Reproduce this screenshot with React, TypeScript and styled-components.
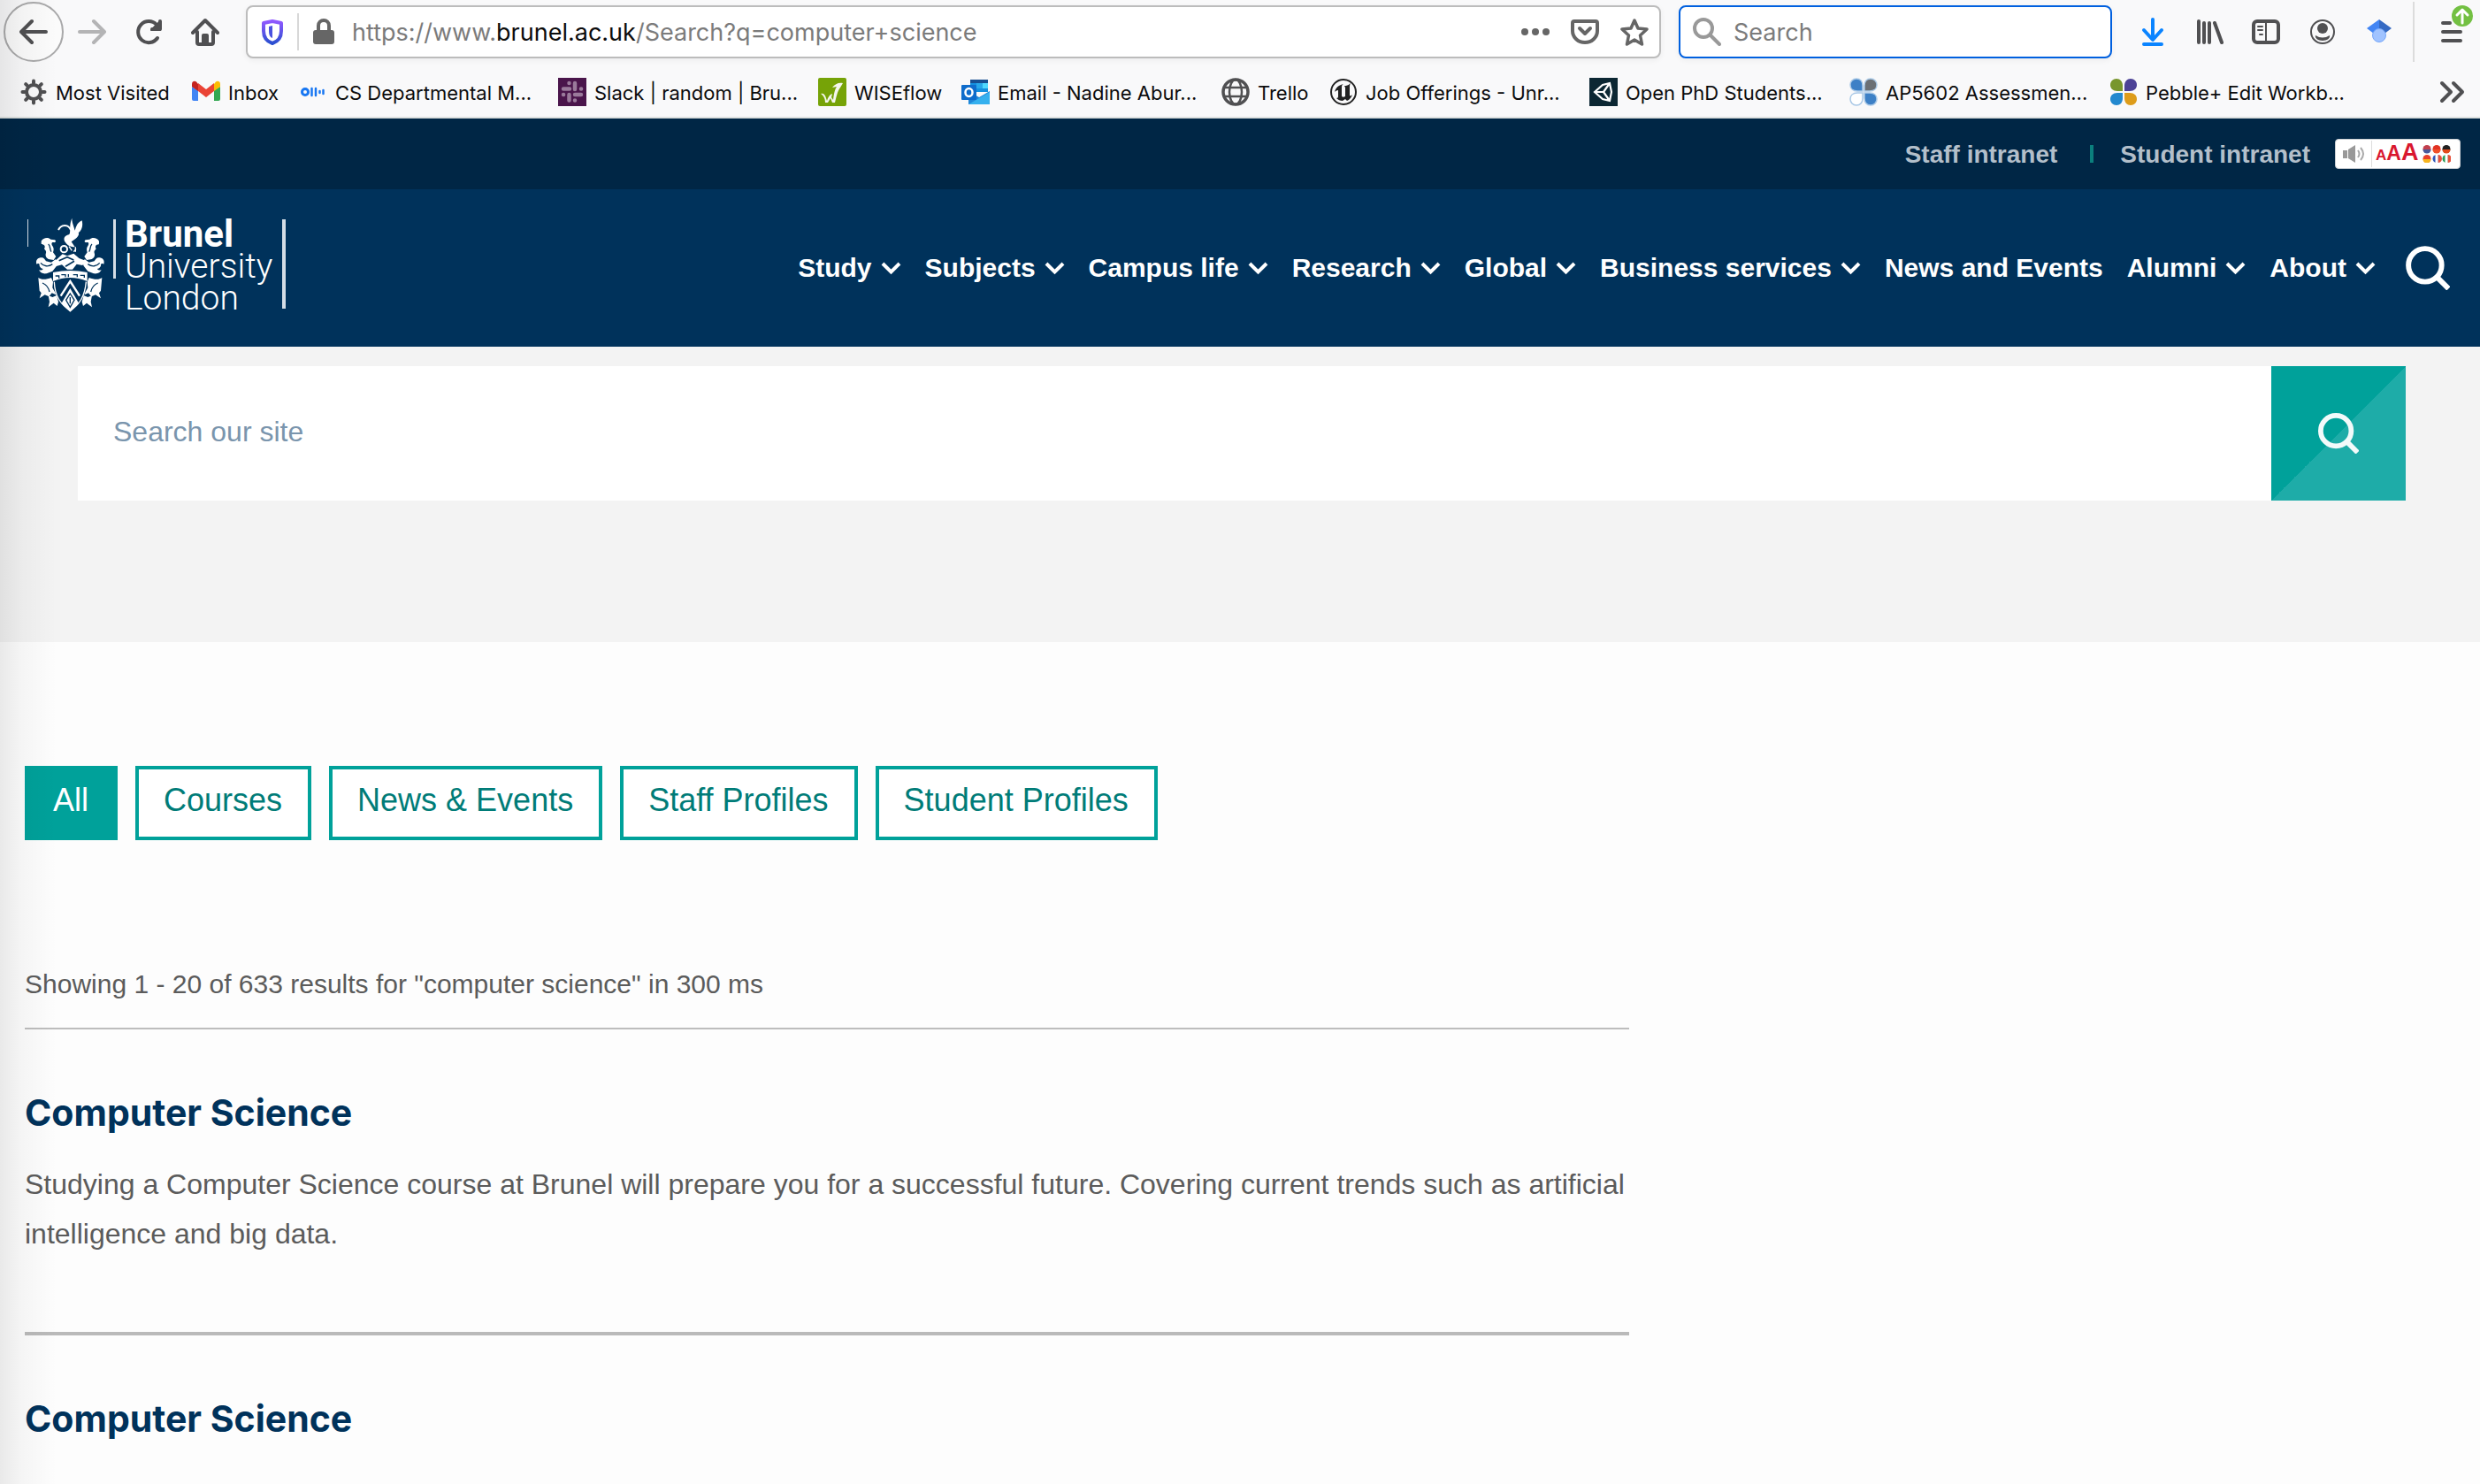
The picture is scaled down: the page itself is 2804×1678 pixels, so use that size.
import React from "react";
import styled, { createGlobalStyle } from "styled-components";

const GlobalStyle = createGlobalStyle`
  *, *::before, *::after { box-sizing: border-box; }
  body { margin: 0; background: #fdfdfd; color: #5b5b5b; font-family: "Liberation Sans", Arial, sans-serif; }
  button, input { font: inherit; }
  button { border: 0; padding: 0; background: none; cursor: pointer; }
  a { color: inherit; text-decoration: none; }
  svg { display: block; flex: none; }
  h2, p { margin: 0; }
`;

const Page = styled.div`
  position: relative;
  min-height: 100vh;
`;

const EdgeShade = styled.div`
  position: absolute;
  inset: 0 auto 0 0;
  width: 64px;
  background: linear-gradient(to right, rgba(0, 0, 0, 0.08), rgba(0, 0, 0, 0.03) 40%, rgba(0, 0, 0, 0));
  pointer-events: none;
`;

/* ---------- browser chrome ---------- */

const Chrome = styled.div`
  background: #f9f9fa;
  border-bottom: 2px solid #dde1e0;
  font-family: Inter, Roboto, sans-serif;
  color: #0c0c0d;
`;

const Toolbar = styled.div`
  display: flex;
  align-items: center;
  height: 72px;
  padding-left: 4px;
`;

const ToolButton = styled.button<{ $tone?: string }>`
  display: flex;
  align-items: center;
  justify-content: center;
  position: relative;
  width: 64px;
  height: 64px;
  flex: none;
  color: ${(p) => p.$tone ?? "#505052"};
`;

const BackButton = styled(ToolButton)`
  width: 68px;
  height: 68px;
  border: 2px solid #a9a9aa;
  border-radius: 50%;
  background: #fbfbfb;
`;

const UpdateBadge = styled.span`
  position: absolute;
  right: 8px;
  top: 2px;
`;

const Field = styled.div<{ $focused?: boolean }>`
  display: flex;
  align-items: center;
  height: 60px;
  padding: 0 12px;
  border: 2px solid ${(p) => (p.$focused ? "#0060df" : "#bcbcbc")};
  border-radius: 8px;
  background: #fff;
  box-shadow: 0 2px 6px rgba(0, 0, 0, 0.06);
  color: #666;
`;

const AddressField = styled(Field)`
  flex: 1;
  margin: 0 20px 0 14px;
`;

const AddressDivider = styled.span`
  width: 2px;
  height: 42px;
  margin: 0 12px;
  background: #d8d8d8;
`;

const AddressText = styled.div`
  flex: 1;
  margin-left: 16px;
  padding-top: 2px;
  font-size: 27px;
  line-height: 36px;
  color: #7b7b7b;
  white-space: nowrap;
  outline: none;
  strong { font-weight: 400; color: #0c0c0d; }
`;

const AddressActions = styled.div`
  display: flex;
  gap: 24px;
`;

const QuickSearch = styled(Field).attrs({ as: "label" })`
  width: 490px;
  margin-right: 14px;
  padding-left: 14px;
  gap: 14px;
  input {
    flex: 1;
    min-width: 0;
    padding: 2px 0 0;
    border: 0;
    outline: 0;
    background: none;
    font-size: 27px;
    line-height: 36px;
    color: #0c0c0d;
  }
  input::placeholder { color: #7b7b7b; opacity: 1; }
`;

const ToolDivider = styled.span`
  width: 2px;
  height: 68px;
  margin: 0 10px 0 6px;
  background: #dcdcdc;
`;

const Bookmarks = styled.nav`
  display: flex;
  align-items: center;
  gap: 24px;
  height: 60px;
  padding: 4px 14px 0 22px;
`;

const Bookmark = styled.a<{ $width: number }>`
  display: flex;
  align-items: center;
  gap: 9px;
  width: ${(p) => p.$width}px;
  font-size: 22px;
  line-height: 28px;
  white-space: nowrap;
`;

const BookmarkLabel = styled.span`
  padding-top: 2px;
`;

const MoreButton = styled.button`
  margin-left: auto;
  color: #505052;
`;

/* ---------- site header ---------- */

const UtilityBar = styled.div`
  display: flex;
  align-items: center;
  justify-content: flex-end;
  height: 80px;
  padding: 0 22px 0 0;
  background: #002645;
  color: #b3bfca;
  font-size: 28px;
  font-weight: 700;
  line-height: 32px;
`;

const UtilityLink = styled.a`
  padding-top: 2px;
`;

const UtilityDivider = styled.span`
  width: 4px;
  height: 20px;
  margin: 0 30px 0 37px;
  background: #0b7f7d;
`;

const AccessButton = styled.button`
  display: flex;
  align-items: center;
  gap: 5px;
  width: 142px;
  height: 34px;
  margin-left: 28px;
  padding: 0 7px;
  border: 1px solid #c9ced3;
  border-radius: 4px;
  background: #fff;
  color: #d9172f;
`;

const Letters = styled.span`
  display: flex;
  align-items: baseline;
  padding-left: 4px;
  border-left: 1px solid #ddd;
  font-weight: 700;
  line-height: 26px;
`;

const Letter = styled.span<{ $size: number }>`
  font-size: ${(p) => p.$size}px;
`;

const SiteHeader = styled.header`
  display: flex;
  align-items: center;
  justify-content: space-between;
  height: 178px;
  padding: 0 34px 0 31px;
  background: #00325b;
  color: #fff;
`;

const Logo = styled.a`
  display: flex;
  align-items: flex-start;
  height: 114px;
`;

const LogoBar = styled.span<{ $width: number; $height: number }>`
  width: ${(p) => p.$width}px;
  height: ${(p) => p.$height}px;
  margin-top: 2px;
  background: #d4dde6;
`;

const LogoCrest = styled.span`
  margin: 0 8px;
`;

const LogoText = styled.span`
  display: flex;
  flex-direction: column;
  width: 178px;
  margin-left: 10px;
  padding-top: 1px;
  font-family: Roboto, sans-serif;
  font-size: 39px;
  font-weight: 300;
  line-height: 36px;
  strong { font-size: 42px; font-weight: 700; }
`;

const MainNav = styled.nav`
  display: flex;
  align-items: center;
  gap: 27px;
  font-size: 30px;
  font-weight: 700;
  line-height: 36px;
`;

const NavLink = styled.a`
  display: flex;
  align-items: center;
  gap: 10px;
  white-space: nowrap;
`;

const NavSearch = styled.button`
  margin-left: 7px;
  color: #fff;
`;

/* ---------- search banner ---------- */

const Banner = styled.section`
  height: 334px;
  padding: 22px 84px 0 88px;
  background: #f3f3f3;
`;

const SiteSearch = styled.form`
  display: flex;
  height: 152px;
  input {
    flex: 1;
    padding: 0 40px 4px;
    border: 0;
    border-radius: 0;
    outline: 0;
    background: #fff;
    font-size: 32px;
    color: #00325b;
  }
  input::placeholder { color: #7a95ad; opacity: 1; }
`;

const SubmitButton = styled.button`
  display: flex;
  align-items: center;
  justify-content: center;
  width: 152px;
  background: linear-gradient(135deg, #00a19a 50%, #1eaca8 50%);
  color: #f2fafa;
`;

/* ---------- results ---------- */

const Content = styled.main`
  padding: 140px 28px 50px;
`;

const Filters = styled.div`
  display: flex;
  gap: 20px;
`;

const Filter = styled.button<{ $active?: boolean }>`
  padding: 14px 29px 20px 28px;
  border: 4px solid #00a19a;
  background: ${(p) => (p.$active ? "#00a19a" : "#fff")};
  color: ${(p) => (p.$active ? "#fff" : "#007c78")};
  font-size: 36px;
  line-height: 42px;
`;

const Results = styled.div`
  width: 66%;
  margin-top: 135px;
`;

const Summary = styled.p`
  padding-bottom: 21px;
  border-bottom: 2px solid #bdbdbd;
  font-size: 30px;
  line-height: 56px;
`;

const Result = styled.article`
  padding: 70px 0 83px;
  & + & { border-top: 4px solid #bababa; }
  &:last-child { padding-bottom: 0; }
  h2 {
    font-family: Inter, sans-serif;
    font-size: 41px;
    font-weight: 700;
    line-height: 48px;
    color: #00325b;
  }
  p { margin-top: 29px; font-size: 32px; line-height: 56px; }
`;

/* ---------- icons ---------- */

type IconProps = { size?: number; children: React.ReactNode; w?: number };

const Stroke = ({ size = 32, w = 4, children }: IconProps) => (
  <svg width={size} height={size} viewBox="0 0 32 32" fill="none" stroke="currentColor" strokeWidth={w} strokeLinecap="round" strokeLinejoin="round" aria-hidden="true">
    {children}
  </svg>
);

const Magnifier = ({ size, w = 3 }: { size: number; w?: number }) => (
  <svg width={size} height={size} viewBox="0 0 32 32" fill="none" stroke="currentColor" strokeWidth={w} aria-hidden="true">
    <circle cx="14" cy="14" r="12" />
    <path d="M22 22l9 9" />
  </svg>
);

const Chevron = () => (
  <svg width="23" height="16" viewBox="0 0 23 16" fill="none" stroke="#fff" strokeWidth="4" aria-hidden="true">
    <path d="M2 3l9.500 9.500L21 3" />
  </svg>
);

const GearIcon = () => (
  <svg width="32" height="32" viewBox="0 0 32 32" fill="none" stroke="#505052" aria-hidden="true">
    <circle cx="16" cy="16" r="8" strokeWidth="4" />
    {[0, 45, 90, 135, 180, 225, 270, 315].map((a) => (
      <path key={a} d="M16 6V3.500" strokeWidth="4" strokeLinecap="round" transform={`rotate(${a} 16 16)`} />
    ))}
  </svg>
);

const GmailIcon = () => (
  <svg width="32" height="32" viewBox="0 0 32 32" aria-hidden="true">
    <path d="M0 10v14a2 2 0 0 0 2 2h5V14z" fill="#4285f4" />
    <path d="M32 10v14a2 2 0 0 1-2 2h-5V14z" fill="#34a853" />
    <path d="M25 7v8l7-5V7c0-3-3-4-5-2.500z" fill="#fbbc04" />
    <path d="M7 7v8L0 10V7c0-3 3-4 5-2.500z" fill="#c5221f" />
    <path d="M7 6l9 7 9-7v9l-9 7-9-7z" fill="#ea4335" />
  </svg>
);

const OtterIcon = () => (
  <svg width="32" height="32" viewBox="0 0 32 32" fill="none" stroke="#1877f2" strokeWidth="3" strokeLinecap="round" aria-hidden="true">
    <circle cx="7" cy="16" r="3.500" />
    <path d="M14.500 12v8M19 12v8M23.500 15v2M27.500 14v4" strokeWidth="2.500" />
  </svg>
);

const SlackIcon = () => (
  <svg width="32" height="32" viewBox="0 0 32 32" stroke="#9a7a9b" strokeWidth="4.500" strokeLinecap="round" aria-hidden="true">
    <path d="M0 0h32v32H0z" fill="#4a154b" stroke="none" />
    <path d="M12.500 6v.1M19 6v7M6 12.500h7M26 12.500h.1M6 19h.1M12.500 19v6.500M19 19h7M19 25.500v.1" />
  </svg>
);

const WiseflowIcon = () => (
  <svg width="32" height="32" viewBox="0 0 32 32" aria-hidden="true">
    <rect width="32" height="32" rx="2" fill="#76a307" />
    <path d="M3 18c3-1 5 1 6 5l1 3c1-4 3-7 6-8l-1 4 2 3c1-8 2-12 4-15l-5 1c3-4 7-6 12-5l-3 5c-3 4-4 9-6 17h-3l-2-5-3 5H8c0-5-2-8-5-10z" fill="#f4f6ee" />
  </svg>
);

const OutlookIcon = () => (
  <svg width="32" height="32" viewBox="0 0 32 32" aria-hidden="true">
    <path d="M10 2h20v14H10z" fill="#1490df" />
    <path d="M10 2h20v4H10z" fill="#174f92" />
    <path d="M17 6h7v6h-7z" fill="#28a8ea" />
    <path d="M24 6h6v6h-6z" fill="#50d9ff" />
    <path d="M8 15l12 7 12-7v15H8z" fill="#1f86d8" />
    <path d="M8 30l24-14v14z" fill="#35b0ee" />
    <rect y="8" width="17" height="17" rx="1" fill="#0f6ccb" />
    <ellipse cx="8.500" cy="16.500" rx="4" ry="4.500" fill="none" stroke="#fff" strokeWidth="2.500" />
  </svg>
);

const GlobeIcon = () => (
  <svg width="32" height="32" viewBox="0 0 32 32" fill="none" stroke="#505052" strokeWidth="2.500" aria-hidden="true">
    <circle cx="16" cy="16" r="14" strokeWidth="3.500" />
    <ellipse cx="16" cy="16" rx="7" ry="14" />
    <path d="M3 11h26M3 21h26" />
  </svg>
);

const UnrealIcon = () => (
  <svg width="32" height="32" viewBox="0 0 32 32" aria-hidden="true">
    <circle cx="16" cy="16" r="14" fill="none" stroke="#222" strokeWidth="2" />
    <path d="M6 16c1-5 5-8 10-9-2 1-2 2-2 4v9c0 2 2 2 4 1V11l-1-2c3 0 5-1 7-3-1 2-1 3-1 5v9c1 1 2 0 3-1-1 4-4 6-6 7l-2-2-3 2c-3 0-5-1-7-3 2 0 2-1 2-3v-6c-2 0-3 1-4 2z" fill="#222" />
  </svg>
);

const UnityIcon = () => (
  <svg width="32" height="32" viewBox="0 0 32 32" fill="none" stroke="#fff" strokeWidth="2.200" aria-hidden="true">
    <path d="M0 0h32v32H0z" fill="#0c2733" stroke="none" />
    <path d="M6 16L15 8l8-2 2 10-2 10-8-2zM6 16h10M16 16l7-10M16 16l7 10" />
  </svg>
);

const petal = "M15 15H9C4 15 1 12 1 8s3-7 7-7 7 3 7 8z";

const PetalIcon = ({ colors, outline }: { colors: string[]; outline?: string }) => (
  <svg width="32" height="32" viewBox="0 0 32 32" stroke={outline} strokeWidth={outline ? 1.5 : 0} aria-hidden="true">
    <path d={petal} fill={colors[0]} />
    <path d={petal} transform="translate(32 0) scale(-1 1)" fill={colors[1]} />
    <path d={petal} transform="translate(0 32) scale(1 -1)" fill={colors[2]} />
    <path d={petal} transform="translate(32 32) scale(-1 -1)" fill={colors[3]} />
  </svg>
);

const Mantling = () => (
  <g>
    <path d="M68 98c6-12 24-14 32-6l14 2c6 4 2 10-4 8-8-2-8 6-4 12 6 8 4 16 2 22l10 14-8 12-14-2c-10-2-16-12-12-22 2-6-2-8-6-14 4-6 2-12-2-14-4 0-8 0-8-4z" />
    <path d="M52 176c-4-14 4-22 18-22 6 0 10 6 14 12l18 4 14-10 10 6-6 16-14 18-20 8c-14 2-22-4-26-12 6 2 12 0 14-4-6 0-14-8-12-14 0-4-6-6-10-2z" />
    <path d="M58 222c10 8 28 6 44 0l6 14-2 20c4 8 10 16 12 24l-14-6-10 12-14-6-18 12 6-18-6-8z" />
    <path d="M92 282l14 6 14-6 6 22-4 14-12-10-18 14 4-18z" />
    <path d="M92 108c8 6 4 18 10 26M66 172c10 12 26 14 40 4M72 240c10 4 20 12 24 30" fill="none" stroke="#00325b" strokeWidth="4" />
  </g>
);

const Crest = () => (
  <svg width="80" height="108" viewBox="48 18 240 324" fill="#fff" aria-hidden="true">
    <path d="M150 102c-10-12-2-24 12-26 8-8-2-26 10-56 0 16 6 26 10 42 4-16 10-28 24-34 4 18 0 32-12 42 4 4-2 14-10 20l-14 10 12 18c-14 0-26-6-32-16z" />
    <path d="M126 60c10-20 34-20 42 0" fill="none" stroke="#fff" strokeWidth="6" />
    <circle cx="145" cy="125" r="11" fill="none" stroke="#fff" strokeWidth="6" />
    <path d="M162 116l10 14M178 134l8-10M184 118v16" stroke="#fff" strokeWidth="4" />
    <path d="M116 164l24-22 16 6 22-8 18 16 22 8-10 16-20-4-14 18h-18l-18-16-22 6z" />
    <path d="M128 164l28-12 22 10M150 184l30-18" fill="none" stroke="#00325b" strokeWidth="5" />
    <Mantling />
    <g transform="translate(332 0) scale(-1 1)"><Mantling /></g>
    <path d="M108 204q58-12 116 0v30q-58-24-116 0z" />
    <path d="M116 216h12v8M136 212h14v8M160 210v10M176 212h14v8M200 214h14v8" fill="none" stroke="#00325b" strokeWidth="4" />
    <path d="M112 236c2 50 22 76 54 98 32-22 50-48 54-98" fill="none" stroke="#fff" strokeWidth="4" />
    <path d="M134 284l32-50 32 50" fill="none" stroke="#fff" strokeWidth="7" />
    <path d="M166 258l30 52-30 28-30-28z" />
    <path d="M166 276l14 22-14 24-14-24zM166 288v22" fill="none" stroke="#00325b" strokeWidth="4" />
  </svg>
);

const flags = [
  ["#c2404e", "#4a5a9c"], ["#e23222", "#f0502a"], ["#222", "#e34b1a"],
  ["#e8402a", "#f6b51e"], ["#2d55b8", "#e5523d"], ["#2a9b57", "#e5523d"],
];

const bookmarks = [
  { label: "Most Visited", width: 171, icon: <GearIcon /> },
  { label: "Inbox", width: 97, icon: <GmailIcon /> },
  { label: "CS Departmental M...", width: 269, icon: <OtterIcon /> },
  { label: "Slack | random | Bru...", width: 270, icon: <SlackIcon /> },
  { label: "WISEflow", width: 138, icon: <WiseflowIcon /> },
  { label: "Email - Nadine Abur...", width: 270, icon: <OutlookIcon /> },
  { label: "Trello", width: 98, icon: <GlobeIcon /> },
  { label: "Job Offerings - Unr...", width: 270, icon: <UnrealIcon /> },
  { label: "Open PhD Students...", width: 270, icon: <UnityIcon /> },
  { label: "AP5602 Assessmen...", width: 270, icon: <PetalIcon colors={["#3d80c6", "#6b7075", "#fff", "#3d80c6"]} outline="#a9c8e6" /> },
  { label: "Pebble+ Edit Workb...", width: 270, icon: <PetalIcon colors={["#78962d", "#4c4296", "#2389cf", "#dd9c1a"]} /> },
];

const navItems = [
  ["Study", true], ["Subjects", true], ["Campus life", true], ["Research", true], ["Global", true],
  ["Business services", true], ["News and Events", false], ["Alumni", true], ["About", true],
] as const;

const filters = ["All", "Courses", "News & Events", "Staff Profiles", "Student Profiles"];

const results = [
  {
    title: "Computer Science",
    text: "Studying a Computer Science course at Brunel will prepare you for a successful future. Covering current trends such as artificial intelligence and big data.",
  },
  { title: "Computer Science" },
];

const BrowserChrome = () => (
  <Chrome>
    <Toolbar>
      <BackButton aria-label="Back">
        <Stroke><path d="M30 16H3M14 4L2 16l12 12" /></Stroke>
      </BackButton>
      <ToolButton $tone="#b4b4b5" aria-label="Forward">
        <Stroke><path d="M2 16h27M18 4l12 12-12 12" /></Stroke>
      </ToolButton>
      <ToolButton aria-label="Reload">
        <Stroke>
          <path d="M26 23A12 12 0 1 1 25 8" />
          <path d="M29 4v10H19z" fill="currentColor" strokeWidth="2" />
          <path d="M29 4v9H20" />
        </Stroke>
      </ToolButton>
      <ToolButton aria-label="Home">
        <Stroke>
          <path d="M2 17L16 3l14 14" />
          <path d="M7 16v12q0 2 2 2h14q2 0 2-2V16" />
          <path d="M14 29v-9h4v9" />
        </Stroke>
      </ToolButton>
      <AddressField>
        <svg width="32" height="32" viewBox="0 0 32 32" fill="none" aria-hidden="true">
          <defs>
            <linearGradient id="shield" x1="0" y1="0" x2="0" y2="1">
              <stop offset="0" stopColor="#9059ff" />
              <stop offset="1" stopColor="#2a4fd0" />
            </linearGradient>
          </defs>
          <path d="M16 4L6 6v9c0 7 4 12 10 14 6-2 10-7 10-14V6z" stroke="url(#shield)" strokeWidth="4" strokeLinejoin="round" />
          <path d="M16 9l-4 1v5c0 4 1 7 4 8z" fill="#4a52e0" />
        </svg>
        <AddressDivider />
        <svg width="32" height="32" viewBox="0 0 32 32" fill="none" stroke="currentColor" strokeWidth="4" aria-hidden="true">
          <rect x="4" y="14" width="24" height="16" rx="3" fill="currentColor" stroke="none" />
          <path d="M10 15V9a6 6 0 0 1 12 0v6" />
        </svg>
        <AddressText role="textbox" aria-label="Address" contentEditable suppressContentEditableWarning spellCheck={false}>
          https://www.<strong>brunel.ac.uk</strong>/Search?q=computer+science
        </AddressText>
        <AddressActions>
          <svg width="32" height="32" viewBox="0 0 32 32" fill="currentColor" aria-hidden="true">
            <circle cx="4" cy="16" r="4" /><circle cx="16" cy="16" r="4" /><circle cx="28" cy="16" r="4" />
          </svg>
          <Stroke><path d="M4 4h24q2 0 2 2v9a14 13 0 0 1-28 0V6q0-2 2-2z" /><path d="M10 12l6 6 6-6" /></Stroke>
          <Stroke w={3.5}><path d="M16 3l4 9 10 1-7.500 7 2 10L16 25l-8.500 5 2-10L2 13l10-1z" /></Stroke>
        </AddressActions>
      </AddressField>
      <QuickSearch $focused>
        <svg width="32" height="32" viewBox="0 0 32 32" fill="none" stroke="#999" strokeWidth="4" strokeLinecap="round" aria-hidden="true">
          <circle cx="12" cy="12" r="10" /><path d="M20 20l10 10" />
        </svg>
        <input type="text" placeholder="Search" aria-label="Web search" />
      </QuickSearch>
      <ToolButton $tone="#0a84ff" aria-label="Downloads">
        <Stroke><path d="M16 2v22M6 14l10 11 10-11M6 30h20" /></Stroke>
      </ToolButton>
      <ToolButton aria-label="Library">
        <Stroke><path d="M4 4v24M10 6v22M16 6v22M22 6l8 22" /></Stroke>
      </ToolButton>
      <ToolButton aria-label="Sidebars">
        <Stroke><rect x="2" y="4" width="28" height="24" rx="4" /><path d="M16 4v24" strokeWidth="2" /><path d="M7 10h5M7 14h5M9 19h3" strokeWidth="2" /></Stroke>
      </ToolButton>
      <ToolButton aria-label="Account">
        <svg width="32" height="32" viewBox="0 0 32 32" fill="currentColor" aria-hidden="true">
          <circle cx="16" cy="16" r="13" fill="none" stroke="currentColor" strokeWidth="2" />
          <circle cx="16" cy="12" r="6" />
          <path d="M8 20q8 5 16 0c1 3-3 6-8 6s-9-3-8-6z" />
        </svg>
      </ToolButton>
      <ToolButton aria-label="Scholar">
        <svg width="32" height="32" viewBox="0 0 32 32" aria-hidden="true">
          <path d="M16 2L2 12l8 6h6z" fill="#4285f4" />
          <path d="M16 2l14 10-8 6h-6z" fill="#356ac3" />
          <circle cx="16" cy="20" r="7.500" fill="#a0c3ff" stroke="#76a7fa" />
        </svg>
      </ToolButton>
      <ToolDivider />
      <ToolButton aria-label="Menu">
        <Stroke><path d="M6 6h8M6 16h20M6 26h20" /></Stroke>
        <UpdateBadge>
          <svg width="24" height="24" viewBox="0 0 24 24" fill="none" stroke="#fff" strokeWidth="3" strokeLinecap="round" strokeLinejoin="round" aria-hidden="true">
            <circle cx="12" cy="12" r="12" fill="#73c042" stroke="none" />
            <path d="M12 20V6M6 11l6-6 6 6" />
          </svg>
        </UpdateBadge>
      </ToolButton>
    </Toolbar>
    <Bookmarks aria-label="Bookmarks">
      {bookmarks.map((b) => (
        <Bookmark key={b.label} href="#" $width={b.width}>
          {b.icon}
          <BookmarkLabel>{b.label}</BookmarkLabel>
        </Bookmark>
      ))}
      <MoreButton aria-label="More bookmarks">
        <Stroke><path d="M3 6l10 10L3 26M16 6l10 10-10 10" /></Stroke>
      </MoreButton>
    </Bookmarks>
  </Chrome>
);

export default function App() {
  return (
    <Page>
      <GlobalStyle />
      <BrowserChrome />
      <UtilityBar>
        <UtilityLink href="#">Staff intranet</UtilityLink>
        <UtilityDivider />
        <UtilityLink href="#">Student intranet</UtilityLink>
        <AccessButton aria-label="Accessibility tools">
          <svg width="28" height="22" viewBox="0 0 28 22" fill="#999" aria-hidden="true">
            <path d="M1 7h5v9H1zM7 6l8-5v20l-8-5z" />
            <path d="M18 7q3 4 0 8M21 4q6 7 0 14" fill="none" stroke="#aaa" strokeWidth="2" />
          </svg>
          <Letters>
            <Letter $size={17}>A</Letter>
            <Letter $size={23}>A</Letter>
            <Letter $size={27}>A</Letter>
          </Letters>
          <svg width="32" height="20" viewBox="0 0 32 20" aria-hidden="true">
            {flags.map(([a, b], i) => (
              <g key={i} transform={`translate(${(i % 3) * 11} ${i < 3 ? 0 : 11})`}>
                <circle cx="5" cy="4.500" r="4.500" fill={a} />
                <path d={i > 3 ? "M6.500 0a4.500 4.500 0 0 1 0 9z" : "M.5 5h9a4.500 4.500 0 0 1-9 0z"} fill={b} />
                {i > 3 && <path d="M3.500 0h3v9h-3z" fill="#fff" />}
              </g>
            ))}
          </svg>
        </AccessButton>
      </UtilityBar>
      <SiteHeader>
        <Logo href="#">
          <LogoBar $width={1} $height={31} />
          <LogoCrest><Crest /></LogoCrest>
          <LogoBar $width={3} $height={67} />
          <LogoText>
            <strong>Brunel</strong>
            <span>University</span>
            <span>London</span>
          </LogoText>
          <LogoBar $width={4} $height={101} />
        </Logo>
        <MainNav aria-label="Main">
          {navItems.map(([label, menu]) => (
            <NavLink key={label} href="#">
              {label}
              {menu && <Chevron />}
            </NavLink>
          ))}
          <NavSearch aria-label="Open search"><Magnifier size={50} w={3.8} /></NavSearch>
        </MainNav>
      </SiteHeader>
      <Banner>
        <SiteSearch>
          <input type="text" placeholder="Search our site" aria-label="Search our site" />
          <SubmitButton type="button" aria-label="Search"><Magnifier size={46} w={4} /></SubmitButton>
        </SiteSearch>
      </Banner>
      <Content>
        <Filters>
          {filters.map((f, i) => (
            <Filter key={f} $active={i === 0}>{f}</Filter>
          ))}
        </Filters>
        <Results>
          <Summary>Showing 1 - 20 of 633 results for "computer science" in 300 ms</Summary>
          {results.map((r, i) => (
            <Result key={i}>
              <h2><a href="#">{r.title}</a></h2>
              {r.text && <p>{r.text}</p>}
            </Result>
          ))}
        </Results>
      </Content>
      <EdgeShade />
    </Page>
  );
}
